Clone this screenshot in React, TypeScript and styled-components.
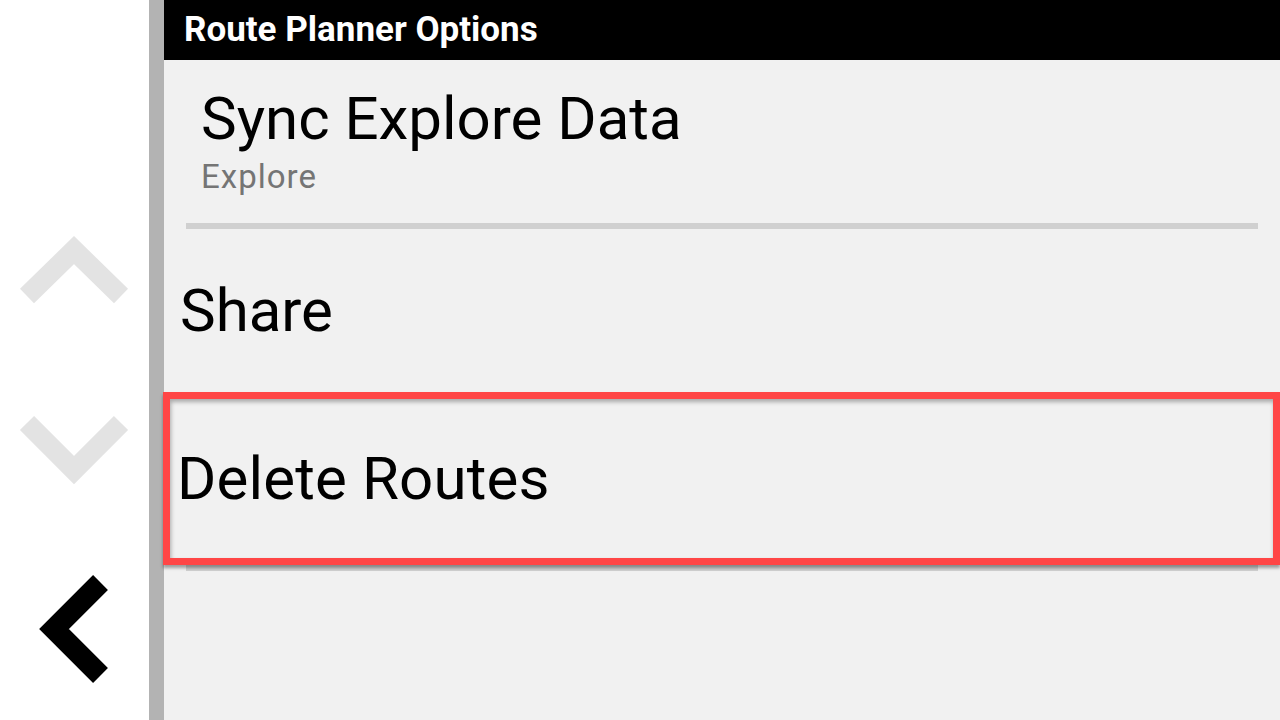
import React from "react";
import styled, { createGlobalStyle } from "styled-components";

const GlobalStyle = createGlobalStyle`
  html, body {
    margin: 0;
    padding: 0;
    width: 100%;
    height: 100%;
    overflow: hidden;
    background: #ffffff;
  }
  #root {
    width: 1280px;
    height: 720px;
  }
  * { box-sizing: border-box; }
`;

const Screen = styled.div`
  display: flex;
  width: 1280px;
  height: 720px;
  font-family: Roboto, "Noto Sans", "Liberation Sans", sans-serif;
  background: #ffffff;
`;

const Sidebar = styled.nav`
  width: 149px;
  flex: 0 0 149px;
  display: flex;
  flex-direction: column;
  background: #ffffff;
`;

const SidebarSpacer = styled.div`
  height: 200px;
  flex: 0 0 200px;
`;

const NavButton = styled.button<{ $h: number }>`
  display: block;
  width: 149px;
  height: ${(p) => p.$h}px;
  flex: 0 0 ${(p) => p.$h}px;
  padding: 0;
  margin: 0;
  border: none;
  background: transparent;
  cursor: pointer;
  svg {
    display: block;
  }
`;

const Separator = styled.div`
  width: 15px;
  flex: 0 0 15px;
  background: #b3b3b3;
`;

const Main = styled.main`
  flex: 1;
  display: flex;
  flex-direction: column;
  background: #f1f1f1;
`;

const Header = styled.header`
  height: 60px;
  flex: 0 0 60px;
  background: #000000;
  color: #ffffff;
  display: flex;
  align-items: center;
  padding: 0 0 1px 20px;
  font-size: 35px;
  font-weight: 700;
`;

const List = styled.div`
  display: flex;
  flex-direction: column;
`;

const TwoLineItem = styled.div`
  display: flex;
  flex-direction: column;
  padding: 24px 0 0 37px;
  height: 163px;
`;

const Title = styled.div`
  font-size: 60px;
  line-height: 70px;
  color: #000000;
  white-space: nowrap;
`;

const Subtitle = styled.div`
  margin-top: 5px;
  font-size: 33px;
  line-height: 36px;
  letter-spacing: 1px;
  color: #757575;
`;

const Divider = styled.div`
  height: 6px;
  margin: 0 22px;
  background: #d0d0d0;
`;

const Row = styled.div<{ $h: number; $indent: number; $selected?: boolean }>`
  position: relative;
  height: ${(p) => p.$h}px;
  display: flex;
  align-items: center;
  padding-left: ${(p) => p.$indent}px;
  font-size: 60px;
  line-height: 70px;
  color: #000000;
  white-space: nowrap;
  ${(p) =>
    p.$selected
      ? `
    margin-left: -1px;
    border: 7px solid #ff4646;
    letter-spacing: 0.15px;
    box-shadow: 0 3px 3px rgba(0, 0, 0, 0.35), inset 1px 3px 4px rgba(0, 0, 0, 0.3);
    z-index: 1;
  `
      : ""}
`;

const Chevron: React.FC<{ points: string; color: string; w: number; h: number; stroke: number }> = ({
  points,
  color,
  w,
  h,
  stroke,
}) => (
  <svg width={w} height={h} viewBox={`0 0 ${w} ${h}`}>
    <polyline
      points={points}
      fill="none"
      stroke={color}
      strokeWidth={stroke}
      strokeLinecap="butt"
      strokeLinejoin="miter"
    />
  </svg>
);

export default function App() {
  return (
    <>
      <GlobalStyle />
      <Screen>
        <Sidebar>
          <SidebarSpacer />
          <NavButton $h={160} aria-label="Scroll up">
            <Chevron points="27,96 74,50 121,96" color="#e3e3e3" w={149} h={160} stroke={20} />
          </NavButton>
          <NavButton $h={160} aria-label="Scroll down">
            <Chevron points="27,63 74,110 121,63" color="#e3e3e3" w={149} h={160} stroke={20} />
          </NavButton>
          <NavButton $h={200} aria-label="Back">
            <Chevron points="100.5,62.5 54,109 100.5,155.5" color="#000000" w={149} h={200} stroke={21} />
          </NavButton>
        </Sidebar>
        <Separator />
        <Main>
          <Header>Route Planner Options</Header>
          <List>
            <TwoLineItem>
              <Title>Sync Explore Data</Title>
              <Subtitle>Explore</Subtitle>
            </TwoLineItem>
            <Divider />
            <Row $h={163} $indent={16}>Share</Row>
            <Row $h={173} $indent={7} $selected>
              Delete Routes
            </Row>
            <Divider />
          </List>
        </Main>
      </Screen>
    </>
  );
}
